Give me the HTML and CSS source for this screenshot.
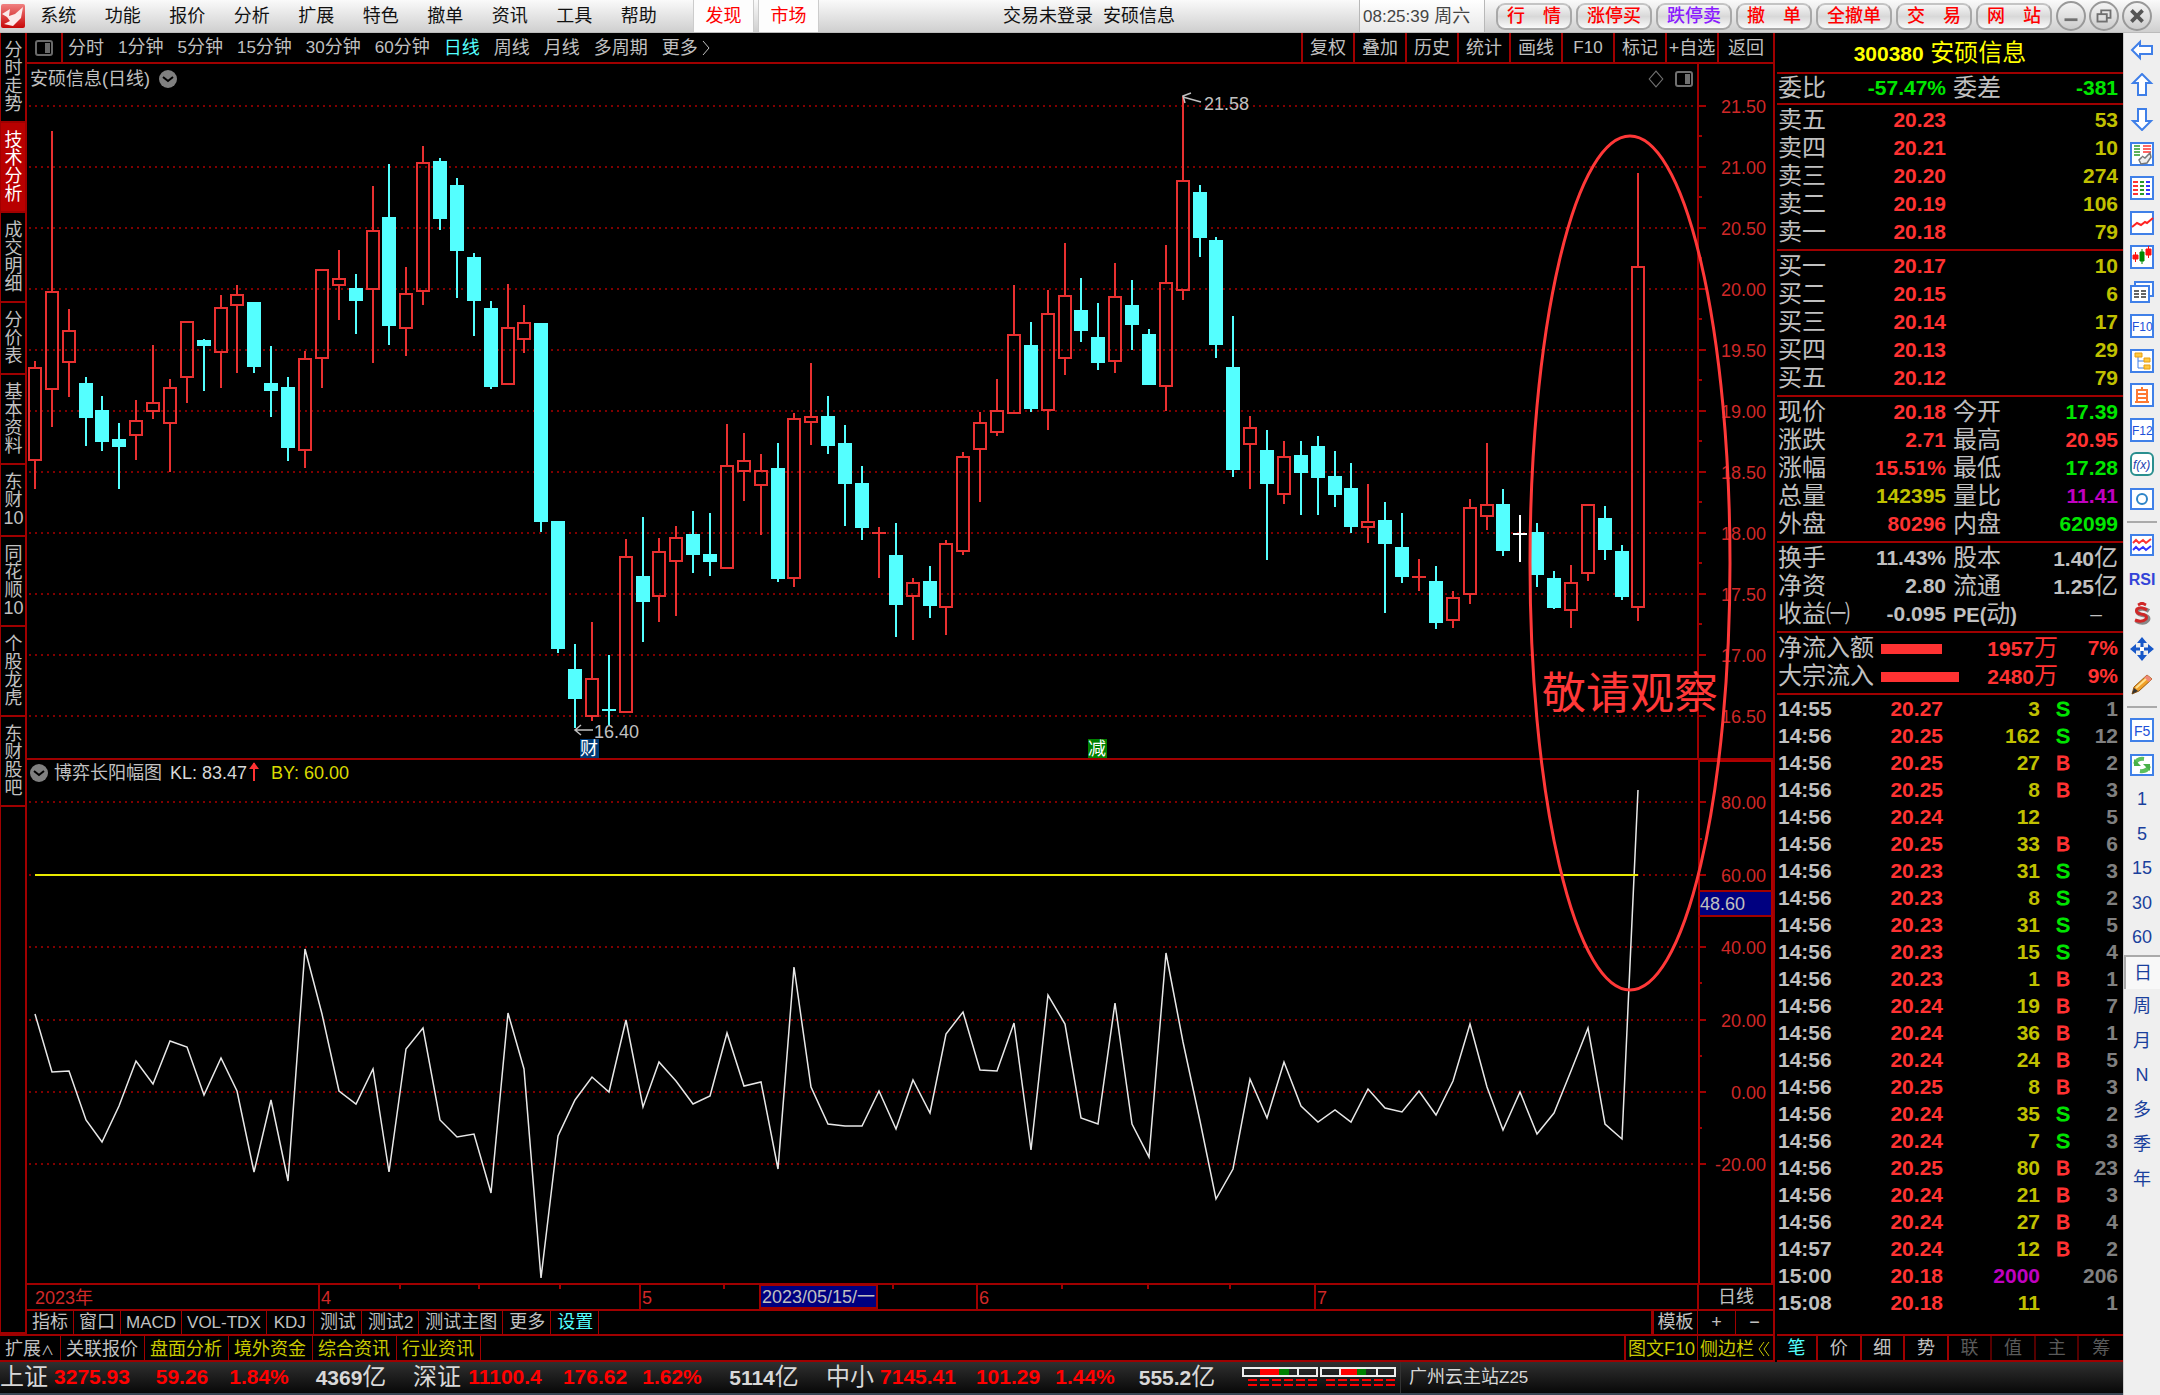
FILE: index.html
```html
<!DOCTYPE html>
<html lang="zh-CN">
<head>
<meta charset="utf-8">
<title>安硕信息 日线</title>
<link rel="stylesheet" href="styles.css">
</head>
<body>
<header class="topbar">
  <svg class="logo" viewBox="0 0 24 24"><defs><linearGradient id="lg" x1="0" y1="0" x2="0" y2="1"><stop offset="0" stop-color="#f08080"/><stop offset="1" stop-color="#c80808"/></linearGradient></defs><rect width="24" height="24" rx="2" fill="url(#lg)"/><path d="M1 10 L9 5 L8 12 L14 10 L22 3 L20 14 L12 22 L3 20 L9 17 L6 13 Z" fill="#fbeaea"/></svg>
  <nav class="menu">
    <button>系统</button><button>功能</button><button>报价</button><button>分析</button><button>扩展</button><button>特色</button><button>撤单</button><button>资讯</button><button>工具</button><button>帮助</button>
  </nav>
  <div class="links"><button>发现</button><button>市场</button></div>
  <h1 class="title">交易未登录&nbsp; 安硕信息</h1>
  <div class="clock"><span class="n">08:25:39</span> 周六</div>
  <div class="pills">
    <button>行　情</button><button>涨停买</button><button class="violet">跌停卖</button><button>撤　单</button><button>全撤单</button><button>交　易</button><button>网　站</button>
  </div>
  <div class="winctl">
    <button aria-label="最小化"><svg viewBox="0 0 28 28"><path d="M7 18h14" stroke="#707070" stroke-width="3"/></svg></button>
    <button aria-label="还原"><svg viewBox="0 0 28 28" fill="none" stroke="#707070" stroke-width="2"><path d="M11 12V8h10v8h-4"/><rect x="7" y="12" width="10" height="8"/></svg></button>
    <button aria-label="关闭"><svg viewBox="0 0 28 28"><path d="M8 8l12 12M20 8L8 20" stroke="#555" stroke-width="4"/></svg></button>
  </div>
</header>

<div class="body">
  <div class="work">
    <div class="upper">
      <div class="left">
        <div class="stage">
          <nav class="side">
            <button>分时走势</button><button class="on">技术分析</button><button>成交明细</button><button>分价表</button><button>基本资料</button><button>东财10</button><button>同花顺10</button><button>个股龙虎</button><button>东财股吧</button>
          </nav>
          <main class="center">
            <div class="toolbar">
              <button class="layout" aria-label="布局"><svg viewBox="0 0 18 16"><rect x="1" y="1" width="16" height="14" rx="2" fill="none" stroke="#6a6a6a" stroke-width="2"/><rect x="10" y="3" width="5" height="10" fill="#6a6a6a"/></svg></button>
              <div class="periods">
                <button>分时</button><button><span class="n">1</span>分钟</button><button><span class="n">5</span>分钟</button><button><span class="n">15</span>分钟</button><button><span class="n">30</span>分钟</button><button><span class="n">60</span>分钟</button><button class="on">日线</button><button>周线</button><button>月线</button><button>多周期</button><button>更多<svg viewBox="0 0 16 16" class="chev"><path d="M5 1l6 7-6 7" fill="none" stroke="#c0c0c0" stroke-width="1"/></svg></button>
              </div>
              <div class="tools">
                <button>复权</button><button>叠加</button><button>历史</button><button>统计</button><button>画线</button><button><span class="n">F10</span></button><button>标记</button><button>+自选</button><button>返回</button>
              </div>
            </div>
            <div class="charts">
              <section class="price">
                <div class="head"><span>安硕信息(日线)</span><svg class="drop" viewBox="0 0 18 18"><circle cx="9" cy="9" r="9" fill="#808080"/><path d="M4 7l5 4 5-4" fill="none" stroke="#000" stroke-width="2"/></svg></div>
                <div class="marks"><svg viewBox="0 0 16 16"><path d="M8 1l6 7-6 7-6-7z" fill="none" stroke="#707070"/></svg><svg viewBox="0 0 18 16"><rect x="1" y="1" width="16" height="14" rx="2" fill="none" stroke="#707070" stroke-width="2"/><rect x="10" y="3" width="5" height="10" fill="#707070"/></svg></div>
                <svg class="plot" id="price"></svg>
              </section>
              <section class="ind">
                <div class="head"><svg class="drop" viewBox="0 0 18 18"><circle cx="9" cy="9" r="9" fill="#808080"/><path d="M4 7l5 4 5-4" fill="none" stroke="#000" stroke-width="2"/></svg><span>博弈长阳幅图</span><span class="kl">KL: 83.47<svg viewBox="0 0 10 20"><path d="M5 1v18M2 6l3-4 3 4z" stroke="#ff3232" stroke-width="2" fill="#ff3232"/></svg></span><span class="by">BY: 60.00</span></div>
                <svg class="plot" id="ind"></svg>
              </section>
              <svg class="note" id="note"></svg>
            </div>
            <div class="dates"><svg class="plot" id="dates"></svg><span class="cycle">日线</span></div>
            <div class="tabs sets">
              <button>指标</button><button>窗口</button><button><span class="n">MACD</span></button><button><span class="n">VOL-TDX</span></button><button class="wide"><span class="n">KDJ</span></button><button>测试</button><button>测试<span class="n">2</span></button><button>测试主图</button><button>更多</button><button class="cyan">设置</button>
              <button class="tpl">模板</button><button class="half">+</button><button class="half">−</button>
            </div>
          </main>
        </div>
        <div class="tabs more">
          <button class="ext">扩展<span class="up">∧</span></button><button>关联报价</button><button class="yel">盘面分析</button><button class="yel">境外资金</button><button class="yel">综合资讯</button><button class="yel">行业资讯</button>
          <button class="yel f10">图文F10</button><button class="yel bar">侧边栏<svg viewBox="0 0 14 16"><path d="M7 1L2 8l5 7M12 1L7 8l5 7" fill="none" stroke="#c8c800"/></svg></button>
        </div>
      </div>

      <aside class="quote">
        <h2><b>300380</b> 安硕信息</h2>
        <div class="sec one"><div class="row"><span>委比</span><b class="g">-57.47%</b><span>委差</span><b class="g">-381</b></div></div>
        <div class="sec">
          <div class="row"><span>卖五</span><b class="r">20.23</b><b class="y">53</b></div>
          <div class="row"><span>卖四</span><b class="r">20.21</b><b class="y">10</b></div>
          <div class="row"><span>卖三</span><b class="r">20.20</b><b class="y">274</b></div>
          <div class="row"><span>卖二</span><b class="r">20.19</b><b class="y">106</b></div>
          <div class="row"><span>卖一</span><b class="r">20.18</b><b class="y">79</b></div>
        </div>
        <div class="sec">
          <div class="row"><span>买一</span><b class="r">20.17</b><b class="y">10</b></div>
          <div class="row"><span>买二</span><b class="r">20.15</b><b class="y">6</b></div>
          <div class="row"><span>买三</span><b class="r">20.14</b><b class="y">17</b></div>
          <div class="row"><span>买四</span><b class="r">20.13</b><b class="y">29</b></div>
          <div class="row"><span>买五</span><b class="r">20.12</b><b class="y">79</b></div>
        </div>
        <div class="sec">
          <div class="row"><span>现价</span><b class="r">20.18</b><span>今开</span><b class="g">17.39</b></div>
          <div class="row"><span>涨跌</span><b class="r">2.71</b><span>最高</span><b class="r">20.95</b></div>
          <div class="row"><span>涨幅</span><b class="r">15.51%</b><span>最低</span><b class="g">17.28</b></div>
          <div class="row"><span>总量</span><b class="y">142395</b><span>量比</span><b class="m">11.41</b></div>
          <div class="row"><span>外盘</span><b class="r">80296</b><span>内盘</span><b class="g">62099</b></div>
        </div>
        <div class="sec">
          <div class="row"><span>换手</span><b>11.43%</b><span>股本</span><b>1.40<i>亿</i></b></div>
          <div class="row"><span>净资</span><b>2.80</b><span>流通</span><b>1.25<i>亿</i></b></div>
          <div class="row"><span>收益㈠</span><b>-0.095</b><span><b>PE(</b>动<b>)</b></span><b class="dash">–</b></div>
        </div>
        <div class="sec">
          <div class="row flow"><span>净流入额</span><span class="meter"><span style="width:61px"></span></span><b class="r">1957<i>万</i></b><b class="r">7%</b></div>
          <div class="row flow"><span>大宗流入</span><span class="meter"><span style="width:78px"></span></span><b class="r">2480<i>万</i></b><b class="r">9%</b></div>
        </div>
        <table class="ticks">
          <tbody>
            <tr><td>14:55</td><td>20.27</td><td>3</td><td class="g">S</td><td>1</td></tr>
            <tr><td>14:56</td><td>20.25</td><td>162</td><td class="g">S</td><td>12</td></tr>
            <tr><td>14:56</td><td>20.25</td><td>27</td><td class="r">B</td><td>2</td></tr>
            <tr><td>14:56</td><td>20.25</td><td>8</td><td class="r">B</td><td>3</td></tr>
            <tr><td>14:56</td><td>20.24</td><td>12</td><td></td><td>5</td></tr>
            <tr><td>14:56</td><td>20.25</td><td>33</td><td class="r">B</td><td>6</td></tr>
            <tr><td>14:56</td><td>20.23</td><td>31</td><td class="g">S</td><td>3</td></tr>
            <tr><td>14:56</td><td>20.23</td><td>8</td><td class="g">S</td><td>2</td></tr>
            <tr><td>14:56</td><td>20.23</td><td>31</td><td class="g">S</td><td>5</td></tr>
            <tr><td>14:56</td><td>20.23</td><td>15</td><td class="g">S</td><td>4</td></tr>
            <tr><td>14:56</td><td>20.23</td><td>1</td><td class="r">B</td><td>1</td></tr>
            <tr><td>14:56</td><td>20.24</td><td>19</td><td class="r">B</td><td>7</td></tr>
            <tr><td>14:56</td><td>20.24</td><td>36</td><td class="r">B</td><td>1</td></tr>
            <tr><td>14:56</td><td>20.24</td><td>24</td><td class="r">B</td><td>5</td></tr>
            <tr><td>14:56</td><td>20.25</td><td>8</td><td class="r">B</td><td>3</td></tr>
            <tr><td>14:56</td><td>20.24</td><td>35</td><td class="g">S</td><td>2</td></tr>
            <tr><td>14:56</td><td>20.24</td><td>7</td><td class="g">S</td><td>3</td></tr>
            <tr><td>14:56</td><td>20.25</td><td>80</td><td class="r">B</td><td>23</td></tr>
            <tr><td>14:56</td><td>20.24</td><td>21</td><td class="r">B</td><td>3</td></tr>
            <tr><td>14:56</td><td>20.24</td><td>27</td><td class="r">B</td><td>4</td></tr>
            <tr><td>14:57</td><td>20.24</td><td>12</td><td class="r">B</td><td>2</td></tr>
            <tr><td>15:00</td><td>20.18</td><td class="m">2000</td><td></td><td>206</td></tr>
            <tr><td>15:08</td><td>20.18</td><td>11</td><td></td><td>1</td></tr>
          </tbody>
        </table>
        <div class="qtabs"><button class="cyan">笔</button><button>价</button><button>细</button><button>势</button><button class="dim">联</button><button class="dim">值</button><button class="dim">主</button><button class="dim">筹</button></div>
      </aside>
    </div>

    <footer class="status">
      <div class="idx"><span>上证</span><b>3275.93</b><b>59.26</b><b>1.84%</b><b class="w">4369<i>亿</i></b></div>
      <div class="idx"><span>深证</span><b>11100.4</b><b>176.62</b><b>1.62%</b><b class="w">5114<i>亿</i></b></div>
      <div class="idx"><span>中小</span><b>7145.41</b><b>101.29</b><b>1.44%</b><b class="w">555.2<i>亿</i></b></div>
      <svg class="gauge" viewBox="0 0 154 22">
        <g fill="none" stroke="#eee" stroke-width="2"><path d="M1 1h74v8H1zM56 1v8M79 1h74v8H79zM98 1v8M135 1v8"/></g>
        <path d="M18 2h19v6H18zM99 2h16v6H99z" fill="#f00"/><path d="M37 2h10v6H37zM115 2h9v6h-9z" fill="#008000"/>
        <path d="M6 13h70M6 18h70M84 13h70M84 18h70" stroke="#f00" stroke-width="2" stroke-dasharray="9 3"/>
      </svg>
      <span class="host">广州云主站<span class="n">Z25</span></span>
    </footer>
  </div>

  <nav class="icons">
    <div class="grp g14">
      <button aria-label="后退"><svg viewBox="0 0 24 24"><path d="M2 12L10 4v4h12v8H10v4z" class="arrow"/></svg></button>
      <button aria-label="上移"><svg viewBox="0 0 24 24"><path d="M12 1l9 9h-5v12H8V10H3z" class="arrow"/></svg></button>
      <button aria-label="下移"><svg viewBox="0 0 24 24"><path d="M12 23l9-9h-5V2H8v12H3z" class="arrow"/></svg></button>
      <button aria-label="报价设置"><svg viewBox="0 0 24 24"><rect x="1" y="1" width="22" height="22" class="box"/><path d="M4 4h6M4 7h6M4 10h6M4 13h6" stroke="#2a9a2a" stroke-width="1.6"/><path d="M13 4h8M13 7h8M13 10h8" stroke="#f33" stroke-width="1.6"/><path d="M12 14l3 2 5-5 1 4-4 6-6 1-2-4 3-3" fill="#eee" stroke="#777" stroke-width="1.5"/></svg></button>
      <button aria-label="报价列表"><svg viewBox="0 0 24 24"><rect x="1" y="1" width="22" height="22" class="box"/><g stroke-width="2"><path d="M3 6h5M3 10h5M3 14h5M3 18h5" stroke="#f33"/><path d="M10 6h4M10 10h4M10 14h4M10 18h4" stroke="#2a9a2a"/><path d="M16 6h4M16 10h4M16 14h4M16 18h4" stroke="#33f"/></g></svg></button>
      <button aria-label="走势"><svg viewBox="0 0 24 24"><rect x="1" y="1" width="22" height="22" class="box"/><path d="M2 16l5-4 4 2 4-3 2 1 6-5" fill="none" stroke="#f22" stroke-width="2"/></svg></button>
      <button aria-label="K线"><svg viewBox="0 0 24 24"><rect x="1" y="1" width="22" height="22" class="box"/><g stroke="#f11" fill="#f11"><path d="M5.500 7v10M18.500 1v12"/><path d="M3 10h5v4H3zM16 4h5v6h-5z"/></g><g stroke="#080" fill="#080"><path d="M12 4v15M10 7h4v9h-4z"/></g></svg></button>
      <button aria-label="多窗"><svg viewBox="0 0 24 24"><path d="M5 6V2h18v14h-3" class="box"/><rect x="1" y="6" width="18" height="16" class="box"/><path d="M4 11h5M11 11h5M4 14h5M11 14h5M4 17h5M11 17h5" stroke="#333" stroke-width="1.5"/></svg></button>
      <button aria-label="F10"><svg viewBox="0 0 24 24"><rect x="1" y="1" width="22" height="22" class="box"/><text x="2" y="17" class="fn">F10</text></svg></button>
      <button aria-label="树形"><svg viewBox="0 0 24 24"><rect x="1" y="1" width="22" height="22" class="box"/><path d="M8 8v11h6M8 12h6" fill="none" stroke="#4080e8"/><path d="M5 4h7v4H5zM14 9h6v4h-6zM14 16h6v4h-6z" fill="#ffc840" stroke="#e8a010"/></svg></button>
      <button aria-label="自选"><svg viewBox="0 0 24 24"><rect x="1" y="1" width="22" height="22" class="box"/><path d="M12 4v3M7 7h10v12H7zM7 11h10M7 15h10M5 19h14" fill="none" stroke="#ff7a33" stroke-width="2"/></svg></button>
      <button aria-label="F12"><svg viewBox="0 0 24 24"><rect x="1" y="1" width="22" height="22" class="box"/><text x="2" y="17" class="fn">F12</text></svg></button>
      <button aria-label="公式"><svg viewBox="0 0 24 24"><rect x="1" y="1" width="22" height="22" rx="5" fill="#fff" stroke="#2a8f8f" stroke-width="2"/><text x="3" y="17" class="fx">f(x)</text></svg></button>
      <button aria-label="圆"><svg viewBox="0 0 24 24"><rect x="1" y="2" width="22" height="20" class="box"/><circle cx="12" cy="12" r="5" fill="none" stroke="#2f86c8" stroke-width="2"/></svg></button>
    </div>
    <hr>
    <div class="grp g5">
      <button aria-label="曲线"><svg viewBox="0 0 24 24"><rect x="1" y="2" width="22" height="20" class="box"/><path d="M3 10l3-3 3 3 4-3 3 3 5-4" fill="none" stroke="#f33" stroke-width="2"/><path d="M3 17l3-3 3 3 4-3 3 3 5-4" fill="none" stroke="#33f" stroke-width="2"/></svg></button>
      <button class="rsi">RSI</button>
      <button aria-label="资金"><svg viewBox="0 0 24 24"><path d="M19 9q-6-4-11-1-2 4 4 5 8 1 6 5-4 5-12 1" fill="none" stroke="#888" stroke-width="4"/><path d="M17 8q-6-4-10-1-2 4 4 5 7 1 5 5-4 4-11 1M8 3l4-2 4 2" fill="none" stroke="#d02828" stroke-width="3"/></svg></button>
      <button aria-label="移动"><svg viewBox="0 0 24 24"><path d="M12 0l5 6H7zM12 24l5-6H7zM0 12l6-5v10zM24 12l-6-5v10z" fill="#1858c8"/><path d="M12 4v16M4 12h16" stroke="#1858c8" stroke-width="3"/><path d="M10 10h4v4h-4z" fill="#fff"/></svg></button>
      <button aria-label="画笔"><svg viewBox="0 0 24 24"><path d="M2 22l2-7L17 3l5 4L9 19z" fill="#f0a028" stroke="#9a5a10"/><path d="M17 3l5 4-3 3-5-4z" fill="#f08878"/><path d="M2 22l2-6 4 3z" fill="#333"/><path d="M6 16L16 7" stroke="#ffe090" stroke-width="2"/></svg></button>
    </div>
    <hr>
    <div class="grp g14">
      <button aria-label="F5"><svg viewBox="0 0 24 24"><rect x="1" y="1" width="22" height="22" class="box"/><text x="4" y="18" class="fn big">F5</text></svg></button>
      <button aria-label="刷新"><svg viewBox="0 0 24 24"><rect x="1" y="2" width="22" height="20" class="box"/><path d="M5 11q2-6 9-5M19 13q-2 6-9 5" fill="none" stroke="#5cc05c" stroke-width="4"/><path d="M4 6v7h7zM20 18v-7h-7z" fill="#48b048"/></svg></button>
      <button>1</button><button>5</button><button>15</button><button>30</button><button>60</button><button class="on">日</button><button>周</button><button>月</button><button>N</button><button>多</button><button>季</button><button>年</button>
    </div>
  </nav>
</div>
<script src="chart.js"></script>
</body>
</html>
```

FILE: styles.css
```css
* { box-sizing: border-box; }
:root { --line: #a00000; --cjk: "Liberation Sans", "Noto Sans CJK SC", sans-serif; }
body {
  margin: 0; min-height: 100vh; display: flex; flex-direction: column;
  background: #000; color: #c0c0c0; font: 18px/24px var(--cjk);
}
button { font: inherit; color: inherit; background: none; border: 0; padding: 0; margin: 0; white-space: nowrap; cursor: pointer; }
h1, h2 { margin: 0; font-weight: 400; }
i { font-style: normal; font-weight: 400; font-size: 24px; }
.n { font-size: 17px; }
.r { color: #ff3232; } .g { color: #00e600; } .y { color: #c0c000; } .m { color: #c000c0; }
.cyan { color: #54ffff; }

/* title bar */
.topbar { position: relative; display: flex; align-items: center; height: 33px; background: linear-gradient(#fafafa, #cfcfcf); color: #111; border-bottom: 1px solid #bbb; }
.logo { width: 24px; height: 24px; margin: 0 1px; }
.menu { display: grid; grid-template-columns: repeat(10, 1fr); width: 645px; }
.links { display: flex; align-self: stretch; margin-left: 22px; color: #f00; }
.links button { background: #fdfdfd; border: 1px solid #ccc; border-width: 0 1px; width: 61px; margin-right: 4px; }
.title { flex: 1; font-size: 18px; text-align: center; padding-right: 4px; }
.clock { align-self: stretch; width: 126px; padding: 4px 3px; background: linear-gradient(#fff, #e8e8e8); border: 1px solid #b8b8b8; border-width: 0 1px; color: #444; white-space: nowrap; }
.pills { display: flex; gap: 4px; margin-left: 11px; }
.pills button { width: 76px; height: 27px; border: 2px solid #a8a8a8; border-top-color: #c4c4c4; border-radius: 9px; background: linear-gradient(#f6f6f6, #d8d8d8 50%, #fafafa); color: #f00; font-weight: 500; line-height: 22px; }
.pills .violet { color: #8a1cff; }
.winctl { display: flex; gap: 3px; margin: 0 8px 0 4px; }
.winctl button { width: 30px; height: 30px; border: 2px solid #999; border-radius: 50%; background: linear-gradient(#f4f4f4, #ccc); }
.winctl svg { display: block; width: 26px; height: 26px; }

.body { flex: 1; display: flex; }
.work, .left, .center { flex: 1; min-width: 0; display: flex; flex-direction: column; }
.upper, .stage { flex: 1; display: flex; }

/* vertical page tabs */
.side { width: 27px; border: 2px solid var(--line); border-width: 0 2px 2px 1px; display: flex; flex-direction: column; }
.side button { width: 24px; padding: 8px 1px 8px 2px; white-space: normal; line-height: 18px; border-bottom: 2px solid var(--line); }
.side .on { background: #b80000; color: #fff; }

.toolbar { display: flex; height: 31px; border-bottom: 2px solid var(--line); }
.layout { width: 36px; border-right: 2px solid var(--line); }
.layout svg { display: block; width: 18px; height: 16px; margin: 0 auto; }
.periods { display: flex; }
.periods button { padding: 0 7px; display: block; }
.periods button:first-child { padding-left: 5px; }
.periods .on { color: #54ffff; }
.chev { width: 16px; height: 16px; vertical-align: -2px; }
.tools { display: flex; margin-left: auto; }
.tools button { width: 52px; border-left: 2px solid var(--line); }
.tools button:last-child { width: 58px; border-right: 2px solid var(--line); }

/* charts */
.charts { position: relative; flex: 1; display: flex; flex-direction: column; }
.charts section { position: relative; flex: 696 1 0; border-right: 2px solid var(--line); }
.charts .ind { flex: 525 1 0; }
.plot { position: absolute; inset: 0; width: 100%; height: 100%; }
.note { position: absolute; inset: 0; width: 100%; height: 100%; pointer-events: none; }
.note text { font: 44px var(--cjk); fill: #ff3838; }
.head { position: relative; z-index: 1; display: flex; align-items: center; padding: 3px 3px 0; }
.drop { width: 18px; height: 18px; margin-left: 9px; }
.ind .head { padding-top: 1px; }
.ind .drop { margin: 0 6px 0 0; }
.kl { margin-left: 8px; color: #d8d8d8; display: flex; }
.kl svg { width: 10px; height: 22px; margin-left: 2px; }
.by { margin-left: 12px; color: #dada00; }
.marks { position: absolute; z-index: 1; right: 80px; top: 6px; display: flex; gap: 10px; }
.marks svg { width: 18px; height: 18px; }
.plot text { font: 18px var(--cjk); }
.plot .ax { fill: #d02828; }
.plot .lab { fill: #c0c0c0; }
.dates { position: relative; height: 24px; border-right: 2px solid var(--line); text-align: right; line-height: 24px; }
.cycle { padding-right: 19px; }

.tabs { display: flex; height: 25px; border-top: 2px solid var(--line); border-right: 2px solid var(--line); line-height: 23px; }
.tabs button { padding: 0 5px; border-right: 1px solid var(--line); }
.tabs .wide { padding: 0 7px; }
.sets button:nth-child(n+6) { padding: 0 5px 0 6px; }
.tabs .tpl { margin-left: auto; border-left: 3px solid var(--line); width: 47px; }
.sets .tpl:nth-child(n+6), .sets .half:nth-child(n+6) { padding: 0; }
.tabs .half { width: 38px; }
.tabs .half:last-child { width: 37px; border-right: 0; }
.more { height: 28px; border-bottom: 2px solid var(--line); line-height: 26px; }
.more button { padding: 0 6px 0 5px; }
.more .ext { width: 61px; }
.up { font-size: 13px; }
.more .yel { color: #c8c800; }
.more .f10 { margin-left: auto; border-left: 2px solid var(--line); width: 74px; padding: 0; }
.more .bar { width: 75px; border-right: 0; padding: 0; }
.bar svg { width: 14px; height: 16px; margin-left: 3px; vertical-align: -2px; }

/* quote panel */
.quote { width: 348px; padding-left: 2px; display: flex; flex-direction: column; font-size: 21px; }
.quote h2 { height: 39px; padding-right: 20px; font-size: 24px; line-height: 39px; text-align: center; color: #ff0; }
.quote h2 b { font-size: 21px; }
.sec { padding: 1px 0 3px; border-top: 2px solid var(--line); }
.sec.one { padding: 0 0 1px; }
.row { display: grid; grid-template-columns: 72px 96px 72px 1fr; padding: 0 5px 0 1px; height: 28px; line-height: 28px; white-space: nowrap; }
.row > span { font-size: 24px; }
.row > span b { font-size: 20px; }
.row > b { text-align: right; }
.row > span:nth-child(3) { padding-left: 7px; }
.row > b:nth-child(3) { grid-column: 4; }
.row .dash { padding-right: 16px; font-weight: 400; }
.row.flow { grid-template-columns: 103px 80px 97px 1fr; }
.row.flow > b:nth-child(3) { grid-column: auto; }
.row.flow > .meter { display: flex; align-items: center; }
.meter span { height: 10px; background: #ff3232; }
.ticks { border-collapse: collapse; table-layout: fixed; width: 100%; font-weight: 700; line-height: 27px; }
.quote > .ticks { border-top: 2px solid var(--line); }
.ticks td { padding: 0; text-align: right; color: #ff3232; }
.ticks td:nth-child(1) { text-align: left; color: #c0c0c0; padding-left: 1px; width: 60px; }
.ticks td:nth-child(2) { width: 106px; }
.ticks td:nth-child(3) { width: 97px; }
.ticks td:nth-child(3):not(.m) { color: #c0c000; }
.ticks td.m { color: #c000c0; }
.ticks td:nth-child(4) { width: 36px; text-align: left; padding-left: 16px; font-weight: 400; -webkit-text-stroke: 1px; }
.ticks td.g { color: #00e600; }
.ticks td:nth-child(5) { color: #808080; padding-right: 5px; }
.qtabs { margin-top: auto; display: grid; grid-template-columns: 41px repeat(7, 1fr); height: 28px; border: 2px solid var(--line); border-width: 2px 0; font-size: 18px; }
.qtabs button { border-right: 2px solid var(--line); }
.qtabs .dim { color: #5a5a5a; border-color: #500; }
.qtabs button:last-child { border-right: 0; }

/* status bar */
.status { display: flex; align-items: center; height: 33px; background: linear-gradient(#303030, #080808); border-bottom: 2px solid #3a4654; font-size: 21px; color: #d8d8d8; }
.idx { display: grid; grid-template-columns: 48px 88px 92px 62px 122px; width: 413px; text-align: center; line-height: 30px; white-space: nowrap; }
.idx span { font-size: 24px; }
.idx b { color: #f00; }
.idx .w { color: #d8d8d8; }
.gauge { width: 154px; height: 22px; margin: 0 4px 0 3px; }
.host { padding-left: 8px; border-left: 1px solid #333; font-size: 18px; line-height: 30px; }

/* right icon rail */
.icons { width: 37px; background: #efefef; border-left: 1px solid #ccc; color: #1a3f9c; }
.grp { display: grid; }
.g14 { grid-template-rows: repeat(14, 1fr); height: 483px; }
.g5 { grid-template-rows: repeat(5, 1fr); height: 173px; }
.grp button { display: flex; align-items: center; justify-content: center; }
.grp svg { width: 24px; height: 24px; }
.grp .on { background: #f8f8f8; border: 1px solid #aaa; border-width: 2px 0 0 2px; }
.icons hr { margin: 5px 3px; border: 0; border-top: 2px solid #aaa; }
.box { fill: #fff; stroke: #4080e8; stroke-width: 2; }
.arrow { fill: #fff; stroke: #3f7fe8; stroke-width: 2; }
.fn { font: 12px var(--cjk); fill: #2050d8; }
.fn.big { font-size: 14px; }
.fx { font: italic 12px "Liberation Sans", sans-serif; fill: #2040b0; }
.icons .rsi { font-size: 16px; font-weight: 700; color: #3344d8; }
```

FILE: chart.js
```js
// Each bar: kind (r rising, c falling, w flat), high, body top, body bottom, low
const bars = `r19.41,19.35,18.60,18.36 r21.29,19.97,19.18,18.87 r19.83,19.65,19.40,19.11 c19.28,19.22,18.95,18.71
c19.12,19.00,18.75,18.67 c18.90,18.76,18.71,18.36 r19.09,18.92,18.80,18.60 r19.54,19.06,19.00,18.93
r19.26,19.19,18.90,18.50 r19.73,19.73,19.28,19.06 c19.59,19.57,19.54,19.16 r19.95,19.84,19.48,19.19
r20.03,19.95,19.87,19.31 c19.88,19.88,19.37,19.31 c19.53,19.22,19.17,18.95 c19.28,19.19,18.70,18.59
r19.49,19.42,18.68,18.53 r20.15,20.15,19.43,19.19 r20.32,20.08,20.03,19.74 c20.12,20.00,19.91,19.63
r20.84,20.47,20.00,19.39 c21.02,20.58,19.70,19.54 r20.18,19.96,19.68,19.45 r21.17,21.03,19.98,19.87
c21.07,21.04,20.58,20.48 c20.91,20.84,20.32,19.92 c20.29,20.25,19.91,19.61 c19.90,19.83,19.20,19.18
r20.04,19.68,19.22,19.22 r19.87,19.72,19.59,19.47 c19.71,19.71,18.10,18.01 c18.09,18.09,17.06,17.02
c17.09,16.88,16.65,16.40 r17.27,16.80,16.50,16.46 c17.00,16.55,16.55,16.43 r17.95,17.80,16.53,16.53
c18.13,17.64,17.44,17.11 r17.96,17.84,17.48,17.27 r18.06,17.96,17.77,17.32 c18.18,17.98,17.83,17.67
c18.16,17.82,17.77,17.65 r18.89,18.55,17.71,17.71 r18.82,18.59,18.51,18.26 r18.65,18.51,18.39,17.98
c18.74,18.52,17.63,17.60 r18.98,18.93,17.63,17.56 r19.39,18.95,18.91,18.72 c19.12,18.95,18.72,18.65
c18.88,18.73,18.41,18.06 c18.55,18.40,18.05,17.94 r18.05,18.00,18.00,17.63 c18.08,17.81,17.42,17.15
r17.63,17.59,17.48,17.12 c17.73,17.60,17.41,17.30 r17.94,17.91,17.39,17.16 r18.66,18.62,17.85,17.82
r18.99,18.90,18.69,18.25 r19.26,19.00,18.83,18.79 r20.03,19.62,18.98,18.98 c19.73,19.53,19.02,18.99
r19.99,19.79,19.01,18.84 r20.37,19.94,19.43,19.29 c20.09,19.82,19.66,19.56 c19.88,19.60,19.40,19.33
r20.21,19.93,19.41,19.31 c20.07,19.86,19.71,19.50 c19.67,19.62,19.22,19.21 r20.36,20.05,19.20,19.00
r21.58,20.88,19.99,19.91 c20.85,20.78,20.42,20.26 c20.42,20.39,19.55,19.43 c19.78,19.35,18.52,18.46
r18.96,18.86,18.73,18.36 c18.84,18.67,18.41,17.78 r18.75,18.62,18.32,18.24 c18.75,18.63,18.50,18.15
c18.79,18.70,18.46,18.15 c18.67,18.46,18.32,18.21 c18.57,18.36,18.06,18.00 r18.40,18.09,18.05,17.92
c18.25,18.10,17.92,17.34 c18.16,17.88,17.65,17.59 r17.79,17.64,17.64,17.52 c17.73,17.60,17.27,17.21
r17.52,17.47,17.29,17.22 r18.28,18.20,17.50,17.42 r18.74,18.23,18.14,18.02 c18.36,18.23,17.86,17.81
w18.15,17.99,17.99,17.76 c18.08,18.00,17.66,17.56 c17.69,17.62,17.39,17.38 r17.74,17.59,17.37,17.22
r18.23,18.23,17.67,17.61 c18.22,18.11,17.87,17.78 c17.90,17.84,17.48,17.45 r20.95,20.18,17.39,17.28`
  .split(/\s+/).map(s => [s[0], ...s.slice(1).split(',').map(Number)]);

const kl = [21.5, 5.6, 5.8, -7.8, -13.8, -3.9, 8.7, 2.1, 14.2, 12.3, -0.8, 9.5, 0.4, -22, -2.2, -24.6, 39.4, 21.5, 0.4, -3.2,
  6.4, -22.1, 11.9, 17.8, -7.8, -12.4, -11.7, -27.8, 21.9, 6.3, -51.3, -12.2, -2.2, 4.1, 0.1, 20, -4.2, 8.2, 3.1, -3.4,
  -1.2, 16.3, 1.7, 2.9, -21.3, 34.6, 1.3, -8.7, -9.3, -9.3, 0.3, -10.1, 3.2, -5.8, 16.1, 22, 6.2, 5.7, 19.1, -15.9,
  26.7, 18.9, -7.2, -8.8, 24.5, -8.7, -18, 38.3, 13.8, -7.9, -29.6, -21.3, 3.6, -7.1, 8.3, -3.8, -8.2, -5, -8.2, 0.9,
  -4.3, -5.4, 0.3, -6.3, 3.1, 18.8, 1.5, -10.4, 0, -11.7, -5.9, 5.9, 17.8, -8.7, -12.9, 83.47];

const AXIS = 77, LINE = '#a00000', DOT = '#800000', RED = '#e83030', CYAN = '#54ffff';
const $ = id => document.getElementById(id);
const line = (x1, y1, x2, y2, c, w = 2, extra = '') => `<path d="M${x1} ${y1}L${x2} ${y2}" stroke="${c}" stroke-width="${w}" fill="none" ${extra}/>`;
const rect = (x, y, w, h, fill, stroke = 'none') => `<rect x="${x}" y="${y}" width="${w}" height="${h}" fill="${fill}" stroke="${stroke}" stroke-width="2"/>`;
const text = (x, y, s, cls, anchor = 'start', extra = '') => `<text x="${x}" y="${y}" class="${cls}" text-anchor="${anchor}" ${extra}>${s}</text>`;
const R = Math.round;

function draw() {
  const W = $('note').clientWidth - AXIS, step = W / 99, X = i => R((i + 0.47) * step);
  const H = $('price').clientHeight, Y = p => R((21.84 - p) / 5.7 * H);
  const grid = y => line(2, y, W - 3, y, DOT, 2, 'stroke-dasharray="2 4"');
  let s = '';

  for (let p = 21.5; p > 16.4; p -= 0.5) {
    s += grid(Y(p)) + line(W, Y(p), W + 8, Y(p), LINE) + text(W + 68, Y(p) + 7, p.toFixed(2), 'ax', 'end');
    if (p > 17) s += line(W, Y(p - 0.25), W + 4, Y(p - 0.25), LINE);
  }
  bars.forEach(([k, hi, top, bot, lo], i) => {
    const x = X(i), c = k === 'r' ? RED : k === 'c' ? CYAN : '#fff';
    const t = Y(top), b = Y(bot);
    s += line(x, Y(hi), x, t, c) + line(x, b, x, Y(lo), c);
    if (t === b) s += line(x - 7, t, x + 7, t, c);
    else if (k === 'r') s += rect(x - 6, t, 12, b - t, 'none', c);
    else s += rect(x - 7, t - 1, 14, b - t + 2, c);
  });
  const hx = X(68), hy = Y(21.58), lx = X(32), ly = Y(16.4);
  s += `<path d="M${hx} ${hy + 1}l18 5M${hx + 8} ${hy - 3}l-8 3l2 7" stroke="#c0c0c0" stroke-width="1.500" fill="none"/>` + text(hx + 21, hy + 14, '21.58', 'lab');
  s += `<path d="M${lx} ${ly + 2}h18M${lx + 6} ${ly - 3}l-6 5l6 5" stroke="#c0c0c0" stroke-width="1.500" fill="none"/>` + text(lx + 19, ly + 10, '16.40', 'lab');
  s += rect(X(33) - 12, H - 21, 19, 19, '#003a75') + text(X(33) - 12, H - 5, '财', '', 'start', 'fill="#fff"');
  s += rect(X(63) - 10, H - 21, 19, 19, '#008000') + text(X(63) - 10, H - 5, '减', '', 'start', 'fill="#fff"');
  s += line(W, 0, W, H, LINE) + line(0, H - 1, W + AXIS, H - 1, LINE);
  $('price').innerHTML = s;

  const h = $('ind').clientHeight, V = v => R((91.7 - v) / 145 * h);
  s = '';
  for (let v = 80; v >= -20; v -= 20) {
    s += grid(V(v)) + line(W, V(v), W + 8, V(v), LINE) + text(W + 68, V(v) + 7, v.toFixed(2), 'ax', 'end');
    if (v > -20) s += line(W, V(v - 10), W + 4, V(v - 10), LINE);
  }
  s += `<path d="${kl.map((v, i) => (i ? 'L' : 'M') + X(i) + ' ' + V(v)).join('')}" fill="none" stroke="#e8e8e8" stroke-width="1.500"/>`;
  s += line(X(0), V(60), X(95), V(60), '#eaea00');
  s += rect(W + 1, 1, AXIS - 4, h - 2, 'none', '#b00000');
  s += rect(W + 2, 132, AXIS - 6, 23, '#000080') + line(W, 131, W + AXIS - 3, 131, LINE) + line(W, 156, W + AXIS - 3, 156, LINE) + text(W + 2, 150, '48.60', 'lab');
  s += line(0, h - 1, W + AXIS, h - 1, LINE);
  $('ind').innerHTML = s;

  s = text(8, 19, '2023年', 'ax') + line(W, 0, W, 24, LINE);
  [[17.3, '4'], [36.3, '5'], [56.3, '6'], [76.3, '7']].forEach(([i, m]) => {
    const x = R(i * step);
    s += line(x, 0, x, 24, LINE) + text(x + 2, 19, m, 'ax');
  });
  [22.1, 26.8, 31.6, 41.3, 51.3, 61.3, 66.4, 71.3].forEach(i => { s += line(R(i * step), 0, R(i * step), 4, LINE); });
  const bx = R(43.4 * step);
  s += rect(bx, 0, 117, 23, '#000080', LINE) + text(bx + 2, 18, '2023/05/15/一', 'lab');
  $('dates').innerHTML = s;

  const T = $('note').clientHeight;
  $('note').innerHTML = `<ellipse cx="${X(94.5)}" cy="${R(T * 0.409)}" rx="${R(step * 5.93)}" ry="${R(T * 0.35)}" fill="none" stroke="#ff3838" stroke-width="3"/>`
    + text(X(89.3), R(T * 0.528), '敬请观察', '');
}
draw();
addEventListener('resize', draw);
```
